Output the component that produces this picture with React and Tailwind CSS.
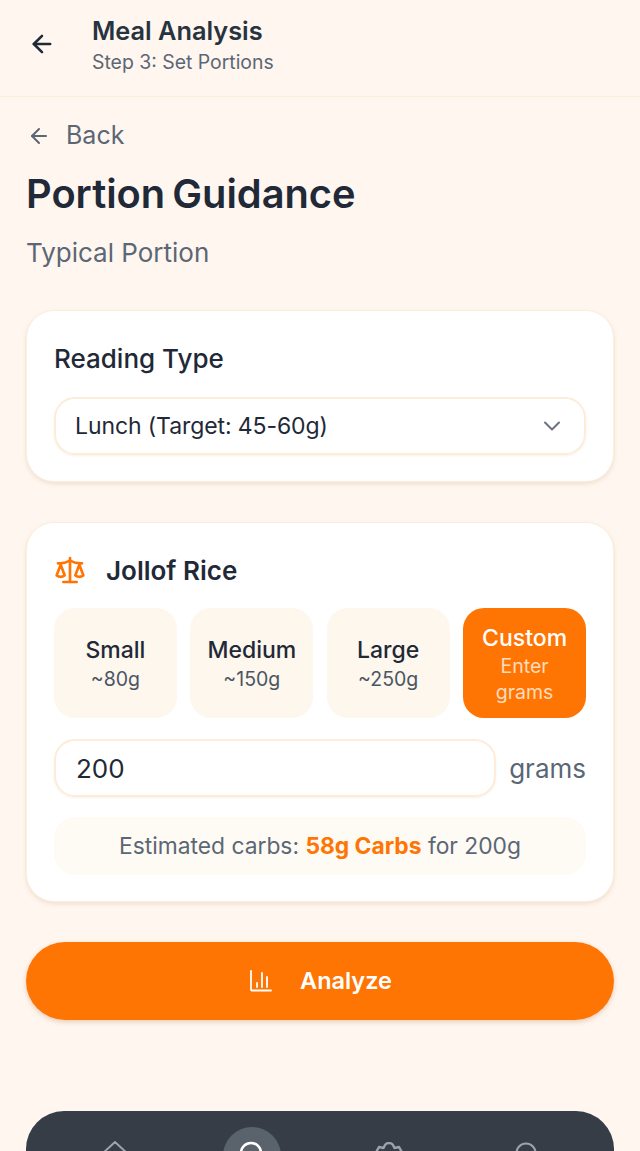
import React from "react";
import { ArrowLeft, ChevronDown, Scale } from "lucide-react";

function Portion({ title, sub, active }) {
  return (
    <div className={"h-[110px] rounded-[21px] flex flex-col items-center justify-center text-center " + (active ? "bg-[#ff7504] pt-[2px]" : "bg-[#fdf7ee]")}>
      <div className={"text-[23px] leading-[30px] font-medium " + (active ? "text-white" : "text-[#1f2937]")}>{title}</div>
      <div className={"text-[19.500px] leading-[26px] " + (active ? "text-[#ffdcbc] w-[80px]" : "text-[#4b5563] mt-[1px]")}>{sub}</div>
    </div>
  );
}

export default function App() {
  return (
    <div className="h-[1151px] overflow-hidden bg-[#fff6ef] font-['Inter',sans-serif]">
      <header className="h-[97px] border-b border-[#fdeedc] flex items-center pl-[28px]">
        <ArrowLeft className="w-[28px] h-[28px] text-[#1f2937] -mt-[8px]" strokeWidth={2.2} />
        <div className="ml-[36px] -mt-[5px]">
          <div className="text-[25.300px] leading-[32px] font-semibold text-[#273340]">Meal Analysis</div>
          <div className="text-[19.400px] leading-[28px] mt-[1px] text-[#5b6775]">Step 3: Set Portions</div>
        </div>
      </header>
      <main className="px-[26px]">
        <div className="flex items-center mt-[22px] h-[34px] text-[#5b6775]">
          <ArrowLeft className="w-[24px] h-[24px] ml-px" strokeWidth={2} />
          <span className="ml-[15px] text-[25px]">Back</span>
        </div>
        <h1 className="mt-[17px] text-[39.800px] leading-[48px] font-semibold text-[#1f2937] [word-spacing:-3px]">Portion Guidance</h1>
        <div className="mt-[18px] text-[26px] leading-[34px] text-[#5b6775]">Typical Portion</div>

        <section className="mt-[40px] h-[172px] rounded-[28px] bg-white border border-[#fbeedd] shadow-[0_2px_4px_rgba(180,140,90,0.2)] px-[27px] pt-[31px]">
          <div className="text-[26px] leading-[34px] font-medium text-[#1f2937]">Reading Type</div>
          <div className="mt-[21px] h-[58px] rounded-[21px] border-2 border-[#fdecd8] shadow-[0_1px_2px_rgba(180,140,90,0.12)] flex items-center justify-between pl-[19px] pr-[18px]">
            <span className="text-[23px] text-[#1f2937] tracking-[-0.1px]">Lunch (Target: 45-60g)</span>
            <ChevronDown className="w-[28px] h-[28px] text-[#6b7280]" strokeWidth={1.7} />
          </div>
        </section>

        <section className="mt-[40px] h-[380px] rounded-[28px] bg-white border border-[#fbeedd] shadow-[0_2px_4px_rgba(180,140,90,0.2)] px-[27px] pt-[30px]">
          <div className="flex items-center h-[34px]">
            <Scale className="w-[32px] h-[32px] text-[#ff7504]" strokeWidth={2} />
            <span className="ml-[20px] text-[26px] font-semibold text-[#1f2937]">Jollof Rice</span>
          </div>
          <div className="mt-[21px] grid grid-cols-4 gap-[13.500px]">
            <Portion title="Small" sub="~80g" />
            <Portion title="Medium" sub="~150g" />
            <Portion title="Large" sub="~250g" />
            <Portion title="Custom" sub="Enter grams" active />
          </div>
          <div className="mt-[21px] flex items-center justify-between">
            <div className="w-[442px] h-[58px] rounded-[21px] border-2 border-[#fdecd8] shadow-[0_1px_2px_rgba(180,140,90,0.12)] flex items-center pl-[20px] text-[26px] text-[#1f2937]">200</div>
            <span className="text-[26px] text-[#5b6775]">grams</span>
          </div>
          <div className="mt-[20px] h-[58px] rounded-[21px] bg-[#fefaf4] flex items-center justify-center text-[22.800px] text-[#5b6775]">
            <span>Estimated carbs: <b className="font-bold text-[#ff7504]">58g Carbs</b> for 200g</span>
          </div>
        </section>

        <button className="mt-[40px] w-full h-[78px] rounded-full bg-[#ff7504] shadow-[0_2px_5px_rgba(180,110,50,0.3)] flex items-center justify-center text-white">
          <svg className="w-[22px] h-[22px] ml-[2px]" viewBox="0 0 22 22" fill="none" stroke="currentColor" strokeWidth="1.8" strokeLinecap="round">
            <path d="M1 1v18.500q0 1 1 1h19" />
            <path d="M7 17v-4M12 17V3M17 17V7" />
          </svg>
          <span className="ml-[28px] text-[23.500px] font-semibold">Analyze</span>
        </button>

        <nav className="mt-[91px] h-[90px] rounded-t-[38px] bg-[#363d46] grid grid-cols-4 px-[20px]">
          <div className="flex justify-center pt-[29px]">
            <svg className="w-[32px] h-[32px] text-[#9ca3af]" viewBox="0 0 32 32" fill="none" stroke="currentColor" strokeWidth="2"><path d="M3 14 16 2l13 12v14H3z" strokeLinejoin="round" /></svg>
          </div>
          <div className="flex justify-center pt-[16px]">
            <div className="w-[58px] h-[58px] rounded-full bg-[#5a626b] flex justify-center pt-[13px]">
              <svg className="w-[30px] h-[30px] text-white" viewBox="0 0 30 30" fill="none" stroke="currentColor" strokeWidth="2.600"><circle cx="14" cy="13" r="10" /><path d="m22 21 6 6" /></svg>
            </div>
          </div>
          <div className="flex justify-center pt-[31px]">
            <svg className="w-[32px] h-[32px] text-[#9ca3af]" viewBox="0 0 32 32" fill="none" stroke="currentColor" strokeWidth="2.400" strokeLinejoin="round"><path d="M12 3q1-2 4-2t4 2l1.500 3 4.500-1 4 7-3 3v2l3 3-4 7-4.500-1-1.500 4h-8l-1.500-4-4.500 1-4-7 3-3v-2l-3-3 4-7 4.500 1z" /></svg>
          </div>
          <div className="flex justify-center pt-[31px]">
            <svg className="w-[32px] h-[32px] text-[#9ca3af]" viewBox="0 0 32 32" fill="none" stroke="currentColor" strokeWidth="2.200"><circle cx="16" cy="11" r="9.500" /><path d="M3 32c0-7 6-10 13-10s13 3 13 10" /></svg>
          </div>
        </nav>
      </main>
    </div>
  );
}
